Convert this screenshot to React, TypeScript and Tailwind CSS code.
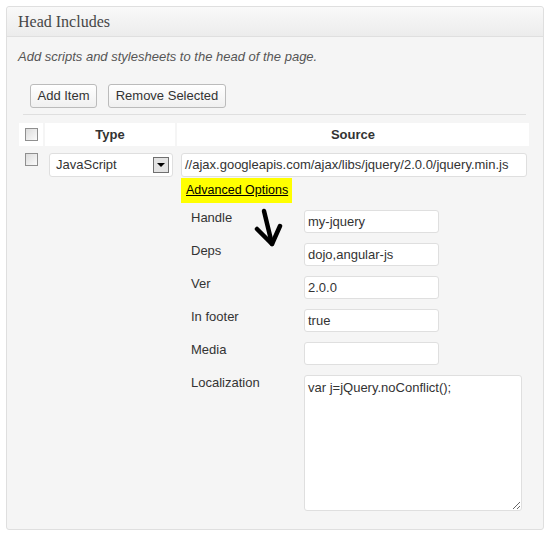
import React from 'react'

const sans = { fontFamily: '"Liberation Sans", Arial, sans-serif' }

function Check() {
  return (
    <span className="block w-[13px] h-[13px] border border-[#8f8f8f] bg-gradient-to-br from-[#dcdcdc] to-[#fbfbfb]" />
  )
}

function Field({ label, value }: { label: string; value: string }) {
  return (
    <div className="flex items-start h-[33px]">
      <span className="w-[123px] pl-[10px] leading-[16px] text-[13px] text-[#333]">{label}</span>
      <div className="w-[135px] h-[23px] bg-white border border-[#dfdfdf] rounded-[3px] px-[3px] leading-[21px] text-[13px] text-[#333]">
        {value}
      </div>
    </div>
  )
}

function AdvancedFields() {
  const rows = [
    ['Handle', 'my-jquery'],
    ['Deps', 'dojo,angular-js'],
    ['Ver', '2.0.0'],
    ['In footer', 'true'],
    ['Media', ''],
  ]
  return (
    <div className="mt-[7px]">
      {rows.map(([l, v]) => (
        <Field key={l} label={l} value={v} />
      ))}
      <div className="flex items-start">
        <span className="w-[123px] pl-[10px] leading-[16px] text-[13px] text-[#333]">Localization</span>
        <textarea
          defaultValue="var j=jQuery.noConflict();"
          className="w-[218px] h-[136px] bg-white border border-[#dfdfdf] rounded-[3px] px-[3px] py-[4px] leading-[16px] text-[13px] text-[#333] outline-none"
          style={sans}
        />
      </div>
    </div>
  )
}

export default function App() {
  return (
    <div className="bg-white w-[549px] h-[536px] pt-[6px] pl-[6px]" style={sans}>
      <div className="relative w-[538px] h-[524px] bg-[#f5f5f5] border border-[#dfdfdf] rounded-[3px]">
        <div className="h-[30px] border-b border-[#dfdfdf] bg-gradient-to-b from-[#f9f9f9] to-[#ececec] pl-[11px] rounded-t-[3px]">
          <h2
            className="leading-[30px] text-[16px] text-[#464646]"
            style={{ fontFamily: '"Liberation Serif", "Times New Roman", serif' }}
          >
            Head Includes
          </h2>
        </div>

        <p className="mt-[12px] pl-[11px] italic text-[13px] leading-[16px] text-[#555]">
          Add scripts and stylesheets to the head of the page.
        </p>

        <div className="mt-[19px] pl-[23px] flex gap-[11px]">
          <button className="h-[24px] w-[67px] border border-[#bbb] rounded-[3px] bg-gradient-to-b from-white to-[#f0f0f0] text-[13px] text-[#333]">
            Add Item
          </button>
          <button className="h-[24px] w-[118px] border border-[#bbb] rounded-[3px] bg-gradient-to-b from-white to-[#f0f0f0] text-[13px] text-[#333]">
            Remove Selected
          </button>
        </div>

        <div className="mt-[6px] ml-[16px] w-[503px] border-t border-[#dfdfdf]" />

        <div className="mt-[8px] ml-[12px] flex gap-[2px] h-[23px]">
          <div className="w-[24px] bg-white flex items-center justify-center">
            <Check />
          </div>
          <div className="w-[130px] bg-white flex items-center justify-center font-bold text-[13px] text-[#333]">
            Type
          </div>
          <div className="w-[352px] bg-white flex items-center justify-center font-bold text-[13px] text-[#333]">
            Source
          </div>
        </div>

        <div className="ml-[12px] flex gap-[2px] pt-[7px]">
          <div className="w-[24px] flex justify-center">
            <Check />
          </div>
          <div className="w-[130px] pl-[4px]">
            <div className="w-[124px] h-[24px] bg-white border border-[#dfdfdf] rounded-[3px] flex items-center justify-between pl-[6px] pr-[3px] text-[13px] text-[#333]">
              <span>JavaScript</span>
              <span className="w-[16px] h-[16px] border border-[#6f6f6f] bg-[#e3e3e3] flex items-center justify-center">
                <span className="w-0 h-0 border-l-[4px] border-r-[4px] border-t-[4px] border-l-transparent border-r-transparent border-t-black" />
              </span>
            </div>
          </div>
          <div className="w-[352px] pl-[4px]">
            <div className="w-[346px] h-[24px] bg-white border border-[#dfdfdf] rounded-[3px] pl-[3px] leading-[22px] text-[13px] text-[#333]">
              //ajax.googleapis.com/ajax/libs/jquery/2.0.0/jquery.min.js
            </div>
            <div className="mt-[1px] w-[111px] h-[25px] bg-[#ffff00] flex items-center pl-[5px]">
              <a href="#" className="text-[12.5px] text-black underline">Advanced Options</a>
            </div>
            <AdvancedFields />
          </div>
        </div>

        <svg className="absolute left-[240px] top-[200px]" width="40" height="50" viewBox="0 0 40 50">
          <g stroke="black" strokeWidth="4.5" strokeLinecap="round" strokeLinejoin="round" fill="none">
            <path d="M17 4 L25 37" />
            <path d="M10 22 L25 37 L33 19" />
          </g>
        </svg>
      </div>
    </div>
  )
}
